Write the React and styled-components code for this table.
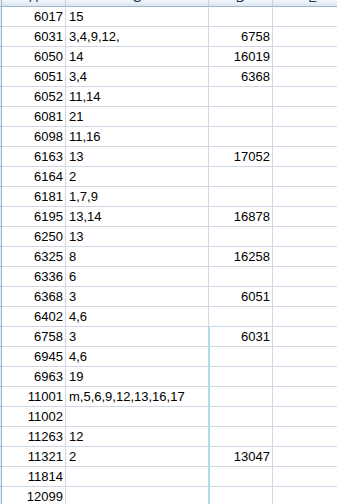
import React from "react";
import styled, { createGlobalStyle } from "styled-components";

const Global = createGlobalStyle`
  html, body { margin: 0; padding: 0; background: #fff; overflow: hidden; }
  body { font-family: "Liberation Sans", Arial, sans-serif; }
`;

const Sheet = styled.div`
  display: grid;
  grid-template-columns: 2px 64px 143px 64px 80px;
  grid-auto-rows: 20px;
  grid-template-rows: 7px;
  width: 353px;
  height: 504px;
  overflow: hidden;
  font-size: 13px;
  color: #000;
`;

const Corner = styled.div`
  background: #e4ecf7;
  border-right: 1px solid #9eb6ce;
  border-bottom: 1px solid #9eb6ce;
  box-sizing: border-box;
`;

const HeaderCell = styled.div`
  background: linear-gradient(#f2f6fb, #dbe5f1);
  border-right: 1px solid #c5d3e3;
  border-bottom: 1px solid #9eb6ce;
  box-sizing: border-box;
  overflow: hidden;
  text-align: center;
  color: #1e395b;
  font-size: 13px;
`;

const HeaderLetter = styled.div`
  line-height: 20px;
  margin-top: -12px;
`;

const RowHead = styled.div`
  background: #e4ecf7;
  border-right: 1px solid #9eb6ce;
  border-bottom: 1px solid #9eb6ce;
  box-sizing: border-box;
`;

const Cell = styled.div`
  box-sizing: border-box;
  border-right: 1px solid ${(p) => (p.$markRight ? "#addaf0" : "#d0d7e5")};
  border-bottom: 1px solid #d0d7e5;
  line-height: 19px;
  padding: 0 ${(p) => (p.$right ? "2px" : "3px")} 0 3px;
  text-align: ${(p) => (p.$right ? "right" : "left")};
  white-space: nowrap;
  position: relative;
  ${(p) => (p.$markLeft ? "box-shadow: inset 1px 0 0 #addaf0;" : "")}
`;

const rows = [
  ["6017", "15", ""],
  ["6031", "3,4,9,12,", "6758"],
  ["6050", "14", "16019"],
  ["6051", "3,4", "6368"],
  ["6052", "11,14", ""],
  ["6081", "21", ""],
  ["6098", "11,16", ""],
  ["6163", "13", "17052"],
  ["6164", "2", ""],
  ["6181", "1,7,9", ""],
  ["6195", "13,14", "16878"],
  ["6250", "13", ""],
  ["6325", "8", "16258"],
  ["6336", "6", ""],
  ["6368", "3", "6051"],
  ["6402", "4,6", ""],
  ["6758", "3", "6031"],
  ["6945", "4,6", ""],
  ["6963", "19", ""],
  ["11001", "m,5,6,9,12,13,16,17", ""],
  ["11002", "", ""],
  ["11263", "12", ""],
  ["11321", "2", "13047"],
  ["11814", "", ""],
  ["12099", "", ""],
];

export default function App() {
  return (
    <>
      <Global />
      <Sheet>
        <Corner />
        {["A", "C", "D", "E"].map((l) => (
          <HeaderCell key={l}>
            <HeaderLetter>{l}</HeaderLetter>
          </HeaderCell>
        ))}
        {rows.map(([a, c, d], i) => (
          <React.Fragment key={i}>
            <RowHead />
            <Cell $right>{a}</Cell>
            <Cell $markRight={i >= 16}>{c}</Cell>
            <Cell $right $markLeft={i >= 16}>{d}</Cell>
            <Cell />
          </React.Fragment>
        ))}
      </Sheet>
    </>
  );
}
